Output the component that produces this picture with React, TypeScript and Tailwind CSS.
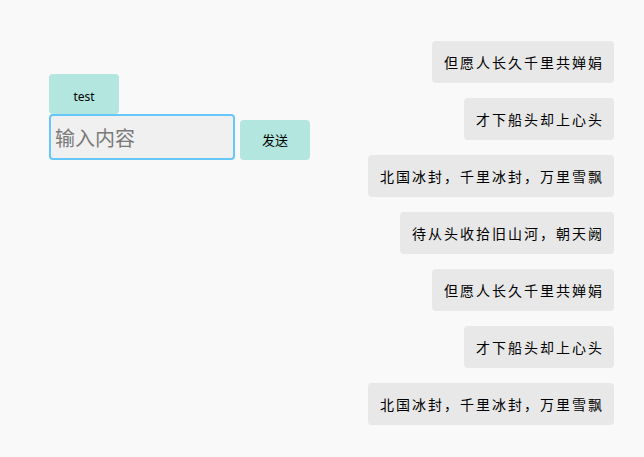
import React from "react";

const msgs: { text: string; w: string }[] = [
  { text: "但愿人长久千里共婵娟", w: "w-[182px]" },
  { text: "才下船头却上心头", w: "w-[150px]" },
  { text: "北国冰封，千里冰封，万里雪飘", w: "w-[246px]" },
  { text: "待从头收拾旧山河，朝天阙", w: "w-[214px]" },
  { text: "但愿人长久千里共婵娟", w: "w-[182px]" },
  { text: "才下船头却上心头", w: "w-[150px]" },
  { text: "北国冰封，千里冰封，万里雪飘", w: "w-[246px]" },
];

export default function App() {
  return (
    <div className="w-[644px] h-[457px] bg-[#f9f9f9] flex justify-between overflow-hidden font-['Noto_Sans','Noto_Sans_CJK_SC',sans-serif]">
      <div className="pl-[49px] pt-[74px] flex flex-col">
        <button className="w-[70px] h-[40px] bg-[#b3e6df] rounded-[4px] text-[12px] text-black flex items-center justify-center pt-[5px]">
          test
        </button>
        <div className="flex items-end gap-[5px]">
          <input
            placeholder="输入内容"
            className="w-[186px] h-[46px] border-2 border-[#66c8fa] rounded-[4px] bg-[#f0f0f0] px-[4px] pt-[2px] text-[20px] placeholder:text-[#7a7a7a] outline-none"
          />
          <button className="w-[70px] h-[40px] bg-[#b3e6df] rounded-[4px] text-[13px] text-black flex items-center justify-center pt-[2px]">
            发送
          </button>
        </div>
      </div>
      <div className="pt-[41px] pr-[30px] flex flex-col items-end gap-[15px]">
        {msgs.map((m, i) => (
          <div
            key={i}
            className={`${m.w} h-[42px] bg-[#e8e8e8] rounded-[4px] px-[12px] flex items-center`}
          >
            <span className="w-full text-justify [text-align-last:justify] text-[14px] leading-none text-black font-['Noto_Sans_CJK_SC',sans-serif]">
              {m.text}
            </span>
          </div>
        ))}
      </div>
    </div>
  );
}
